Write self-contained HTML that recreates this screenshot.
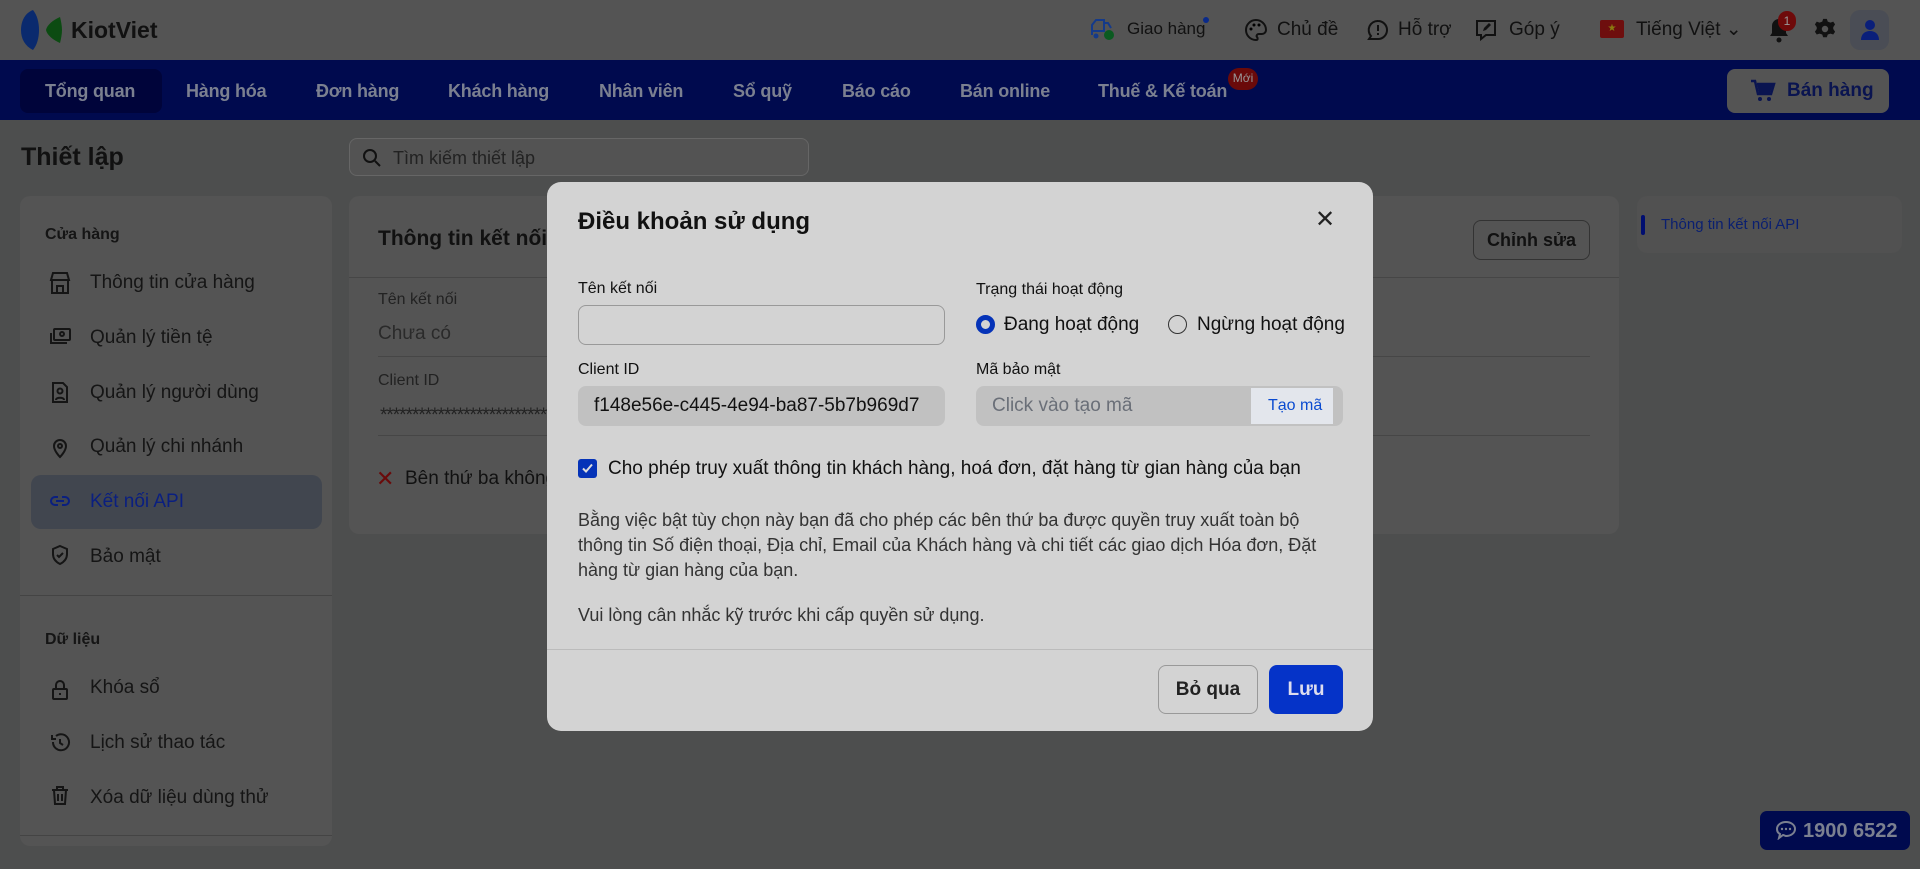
<!DOCTYPE html>
<html><head><meta charset="utf-8">
<style>
*{box-sizing:border-box;margin:0;padding:0}
body{width:1920px;height:869px;overflow:hidden;background:#4d4e4e;font-family:"Liberation Sans","DejaVu Sans",sans-serif;position:relative;color:#111}
.a{position:absolute;white-space:nowrap}
.c{line-height:24px}
svg{display:block}
</style></head><body>
<!-- top bar -->
<div class="a" style="left:0;top:0;width:1920px;height:60px;background:#545454"></div>
<svg class="a" style="left:20px;top:10px" width="42" height="40" viewBox="0 0 42 40"><path d="M13 0C5 3 1 11 1 20c0 9 4 16 12 20 4-5 6-12 6-20S17 5 13 0z" fill="#0a2a6e"/><path d="M40 7c-7 3-13 8-14 13 1 5 7 10 14 13 1-4 2-9 2-13s-1-9-2-13z" fill="#0c4b12"/></svg>
<div class="a" style="left:71px;top:16px;font-size:23px;font-weight:bold;line-height:28px;color:#111">KiotViet</div>

<svg class="a" style="left:1090px;top:17px" width="26" height="24" viewBox="0 0 26 24"><path d="M2 18V8l4-5h8v11H2M14 6h4l3 5" fill="none" stroke="#143a8a" stroke-width="2"/><circle cx="6" cy="19" r="2.5" fill="#143a8a"/><circle cx="19" cy="18" r="5" fill="#0a5a20"/></svg>
<div class="a c" style="left:1127px;top:17px;font-size:17px;color:#111">Giao hàng</div>
<div class="a" style="left:1203px;top:17px;width:6px;height:6px;border-radius:50%;background:#0a2a8a"></div>
<svg class="a" style="left:1244px;top:18px" width="24" height="24" viewBox="0 0 24 24"><path d="M12 2a10 10 0 100 20c2 0 2-2 1-3s0-3 2-3h3a4 4 0 004-4C22 6 17 2 12 2z" fill="none" stroke="#111" stroke-width="2"/><circle cx="7" cy="11" r="1.5"/><circle cx="10" cy="7" r="1.5"/><circle cx="15" cy="7" r="1.5"/></svg>
<div class="a c" style="left:1277px;top:18px;font-size:19px">Chủ đề</div>
<svg class="a" style="left:1366px;top:18px" width="24" height="24" viewBox="0 0 24 24"><path d="M12 3a9 9 0 110 18H3l2-3A9 9 0 0112 3z" fill="none" stroke="#111" stroke-width="2"/><path d="M12 7v6M12 15v2" stroke="#111" stroke-width="2"/></svg>
<div class="a c" style="left:1398px;top:18px;font-size:19px">Hỗ trợ</div>
<svg class="a" style="left:1474px;top:18px" width="24" height="24" viewBox="0 0 24 24"><path d="M3 3h18v14h-9l-5 4v-4H3z" fill="none" stroke="#111" stroke-width="2"/><path d="M9 13l1-3 5-5 2 2-5 5z" fill="#111"/></svg>
<div class="a c" style="left:1509px;top:18px;font-size:19px">Góp ý</div>
<div class="a" style="left:1600px;top:20px;width:24px;height:18px;background:#6e0e0e;border-radius:2px;color:#8a7a10;font-size:10px;text-align:center;line-height:18px">★</div>
<div class="a c" style="left:1636px;top:18px;font-size:19px">Tiếng Việt ⌄</div>
<svg class="a" style="left:1767px;top:16px" width="24" height="28" viewBox="0 0 24 28"><path d="M12 3a7 7 0 00-7 7v7l-2 3h18l-2-3v-7a7 7 0 00-7-7z" fill="#111"/><circle cx="12" cy="24" r="2.5" fill="#111"/></svg>
<div class="a" style="left:1778px;top:11px;width:18px;height:20px;border-radius:9px;background:#6e0a0a;color:#999;font-size:12px;text-align:center;line-height:20px">1</div>
<svg class="a" style="left:1814px;top:18px" width="22" height="22" viewBox="0 0 24 24"><path d="M10 1h4l1 3 3 1 3-1 2 3-2 3v2l2 3-2 3-3-1-3 1-1 3h-4l-1-3-3-1-3 1-2-3 2-3v-2L1 7l2-3 3 1 3-1z" fill="#111"/><circle cx="12" cy="12" r="3.5" fill="#545454"/></svg>
<div class="a" style="left:1850px;top:10px;width:39px;height:40px;border-radius:10px;background:#4a4d55"></div>
<svg class="a" style="left:1859px;top:18px" width="22" height="24" viewBox="0 0 22 24"><circle cx="11" cy="7" r="5" fill="#0a1f7a"/><path d="M2 22c0-6 4-9 9-9s9 3 9 9z" fill="#0a1f7a"/></svg>

<!-- nav -->
<div class="a" style="left:0;top:60px;width:1920px;height:60px;background:#000a4e"></div>
<div class="a" style="left:20px;top:69px;width:142px;height:44px;border-radius:8px;background:#00043a"></div>
<div style="position:absolute;top:79px;left:0;font-size:18px;font-weight:bold;color:#7b8090;line-height:24px;letter-spacing:-0.2px">
<span class="a" style="left:45px">Tổng quan</span>
<span class="a" style="left:186px">Hàng hóa</span>
<span class="a" style="left:316px">Đơn hàng</span>
<span class="a" style="left:448px">Khách hàng</span>
<span class="a" style="left:599px">Nhân viên</span>
<span class="a" style="left:733px">Sổ quỹ</span>
<span class="a" style="left:842px">Báo cáo</span>
<span class="a" style="left:960px">Bán online</span>
<span class="a" style="left:1098px">Thuế &amp; Kế toán</span>
</div>
<div class="a" style="left:1228px;top:68px;width:30px;height:22px;border-radius:11px;background:#6a0a0a;color:#999;font-size:12px;text-align:center;line-height:20px">Mới</div>
<div class="a" style="left:1727px;top:69px;width:162px;height:44px;border-radius:8px;background:#545454"></div>
<svg class="a" style="left:1750px;top:78px" width="26" height="26" viewBox="0 0 26 26"><path d="M1 3h4l3 13h13l3-10H7" fill="none" stroke="#0a1450" stroke-width="2.5"/><circle cx="10" cy="21" r="2" fill="#0a1450"/><circle cx="19" cy="21" r="2" fill="#0a1450"/><path d="M7 6h16l-3 9H9z" fill="#0a1450"/></svg>
<div class="a c" style="left:1787px;top:79px;font-size:19px;font-weight:bold;color:#0a1450">Bán hàng</div>

<!-- page -->
<div class="a" style="left:21px;top:142px;font-size:25px;font-weight:bold;line-height:30px;color:#111">Thiết lập</div>
<div class="a" style="left:349px;top:138px;width:460px;height:38px;border:1px solid #666;border-radius:8px;background:#535353"></div>
<svg class="a" style="left:362px;top:148px" width="20" height="20" viewBox="0 0 20 20"><circle cx="8" cy="8" r="6" fill="none" stroke="#111" stroke-width="2"/><path d="M13 13l5 5" stroke="#111" stroke-width="2"/></svg>
<div class="a c" style="left:393px;top:146px;font-size:18px;color:#222">Tìm kiếm thiết lập</div>

<div class="a" style="left:20px;top:196px;width:312px;height:650px;border-radius:10px;background:#545454"></div>
<div class="a" style="left:31px;top:475px;width:291px;height:54px;border-radius:10px;background:#41464f"></div>
<div class="a" style="left:20px;top:595px;width:312px;height:1px;background:#444"></div>
<div class="a" style="left:20px;top:835px;width:312px;height:1px;background:#444"></div>
<div style="position:absolute;left:0;top:0;font-size:19px;color:#151515;line-height:24px">
<span class="a" style="left:45px;top:223px;font-size:16px;font-weight:bold">Cửa hàng</span>
<span class="a" style="left:90px;top:271px">Thông tin cửa hàng</span>
<span class="a" style="left:90px;top:326px">Quản lý tiền tệ</span>
<span class="a" style="left:90px;top:381px">Quản lý người dùng</span>
<span class="a" style="left:90px;top:435px">Quản lý chi nhánh</span>
<span class="a" style="left:90px;top:490px;color:#0a1f80">Kết nối API</span>
<span class="a" style="left:90px;top:545px">Bảo mật</span>
<span class="a" style="left:45px;top:628px;font-size:16px;font-weight:bold">Dữ liệu</span>
<span class="a" style="left:90px;top:676px">Khóa sổ</span>
<span class="a" style="left:90px;top:731px">Lịch sử thao tác</span>
<span class="a" style="left:90px;top:786px">Xóa dữ liệu dùng thử</span>
</div>
<svg class="a" style="left:48px;top:0" width="24" height="869" viewBox="0 0 24 869" fill="none" stroke="#151515" stroke-width="2">
<path d="M3 280h18l-2-7H5zM4 280v13h16v-13M9 293v-7h6v7"/>
<rect x="6" y="329" width="16" height="11" rx="1"/><path d="M3 333v10h16"/><circle cx="14" cy="334" r="2"/>
<path d="M5 383h10l4 4v15H5z"/><circle cx="12" cy="391" r="2.5"/><path d="M8 400c0-3 8-3 8 0"/>
<path d="M12 457s6-6 6-11a6 6 0 00-12 0c0 5 6 11 6 11z"/><circle cx="12" cy="446" r="2"/>
<path d="M10 497H7a4 4 0 000 8h3M14 497h3a4 4 0 010 8h-3M8 501h8" stroke="#0a1f80"/>
<path d="M12 546l7 3v5c0 5-3 8-7 10-4-2-7-5-7-10v-5z"/><path d="M9 555l2 2 4-4"/>
<rect x="5" y="689" width="14" height="10" rx="1"/><path d="M8 689v-4a4 4 0 018 0v4M12 693v2"/>
<path d="M5 742a8 8 0 103-6M4 735v4h4M12 739v4l3 2"/>
<path d="M4 790h16M9 790v-3h6v3M6 790l1 14h10l1-14M10 794v7M14 794v7"/>
</svg>

<div class="a" style="left:349px;top:196px;width:1270px;height:338px;border-radius:10px;background:#545454"></div>
<div class="a" style="left:349px;top:277px;width:1270px;height:1px;background:#464646"></div>
<div class="a" style="left:378px;top:226px;font-size:21px;font-weight:bold;line-height:26px">Thông tin kết nối API</div>
<div class="a" style="left:1473px;top:220px;width:117px;height:40px;border:1px solid #333;border-radius:8px;font-size:18px;font-weight:bold;line-height:38px;text-align:center">Chỉnh sửa</div>
<div class="a c" style="left:378px;top:288px;font-size:16px;color:#222">Tên kết nối</div>
<div class="a c" style="left:378px;top:322px;font-size:19px;color:#2a2a2a">Chưa có</div>
<div class="a" style="left:378px;top:356px;width:1212px;height:1px;background:#464646"></div>
<div class="a c" style="left:378px;top:369px;font-size:16px;color:#222">Client ID</div>
<div class="a c" style="left:380px;top:404px;font-size:19px;color:#222;letter-spacing:-1px">********************************</div>
<div class="a" style="left:378px;top:435px;width:1212px;height:1px;background:#464646"></div>
<div class="a c" style="left:376px;top:467px;font-size:22px;color:#6a0a0a">✕</div>
<div class="a c" style="left:405px;top:467px;font-size:19px">Bên thứ ba không được phép truy xuất</div>

<div class="a" style="left:1637px;top:196px;width:265px;height:57px;border-radius:10px;background:#515151"></div>
<div class="a" style="left:1641px;top:215px;width:4px;height:20px;background:#000e70;border-radius:2px"></div>
<div class="a c" style="left:1661px;top:213px;font-size:15px;color:#0a1f70">Thông tin kết nối API</div>

<div class="a" style="left:1760px;top:811px;width:150px;height:39px;border-radius:7px;background:#000a4e"></div>
<svg class="a" style="left:1775px;top:820px" width="22" height="20" viewBox="0 0 22 20"><path d="M11 2C6 2 2 5 2 9c0 2 1 4 3 5l-1 4 4-3c1 0 2 1 3 1 5 0 9-3 9-7s-4-7-9-7z" fill="none" stroke="#7b8090" stroke-width="2"/><circle cx="7" cy="9" r="1.2" fill="#7b8090"/><circle cx="11" cy="9" r="1.2" fill="#7b8090"/><circle cx="15" cy="9" r="1.2" fill="#7b8090"/></svg>
<div class="a c" style="left:1803px;top:819px;font-size:20px;font-weight:bold;color:#7b8090">1900 6522</div>

<!-- modal -->
<div class="a" style="left:547px;top:182px;width:826px;height:549px;border-radius:14px;background:#d3d3d3"></div>
<div class="a" style="left:578px;top:207px;font-size:24px;font-weight:bold;line-height:30px;color:#111">Điều khoản sử dụng</div>
<div class="a" style="left:1315px;top:206px;font-size:24px;line-height:28px;color:#222">✕</div>

<div class="a c" style="left:578px;top:277px;font-size:16px;color:#111">Tên kết nối</div>
<div class="a" style="left:578px;top:305px;width:367px;height:40px;border:1px solid #999;border-radius:8px;background:#d3d3d3"></div>
<div class="a c" style="left:976px;top:278px;font-size:16px;color:#111">Trạng thái hoạt động</div>
<div class="a" style="left:976px;top:315px;width:19px;height:19px;border-radius:50%;border:5px solid #0533b8;background:#d3d3d3"></div>
<div class="a c" style="left:1004px;top:313px;font-size:19px;color:#111">Đang hoạt động</div>
<div class="a" style="left:1168px;top:315px;width:19px;height:19px;border-radius:50%;border:1.5px solid #333"></div>
<div class="a c" style="left:1197px;top:313px;font-size:19px;color:#111">Ngừng hoạt động</div>

<div class="a c" style="left:578px;top:358px;font-size:16px;color:#111">Client ID</div>
<div class="a" style="left:578px;top:386px;width:367px;height:40px;border-radius:8px;background:#c1c1c1"></div>
<div class="a c" style="left:594px;top:394px;font-size:19px;color:#111">f148e56e-c445-4e94-ba87-5b7b969d7</div>
<div class="a c" style="left:976px;top:358px;font-size:16px;color:#111">Mã bảo mật</div>
<div class="a" style="left:976px;top:386px;width:367px;height:40px;border-radius:8px;background:#c1c1c1"></div>
<div class="a" style="left:1251px;top:388px;width:82px;height:36px;background:#e3e6ec"></div>
<div class="a c" style="left:992px;top:394px;font-size:19px;color:#6a6f78">Click vào tạo mã</div>
<div class="a c" style="left:1268px;top:394px;font-size:16px;color:#0b4bd0">Tạo mã</div>

<div class="a" style="left:578px;top:459px;width:19px;height:19px;border-radius:3px;background:#0533b8"></div>
<svg class="a" style="left:580px;top:461px" width="15" height="15" viewBox="0 0 15 15"><path d="M3 7.5l3 3 6-7" fill="none" stroke="#ddd" stroke-width="2"/></svg>
<div class="a c" style="left:608px;top:457px;font-size:19px;color:#111">Cho phép truy xuất thông tin khách hàng, hoá đơn, đặt hàng từ gian hàng của bạn</div>

<div class="a" style="left:578px;top:508px;width:770px;font-size:18px;line-height:25px;color:#333;white-space:normal">Bằng việc bật tùy chọn này bạn đã cho phép các bên thứ ba được quyền truy xuất toàn bộ thông tin Số điện thoại, Địa chỉ, Email của Khách hàng và chi tiết các giao dịch Hóa đơn, Đặt hàng từ gian hàng của bạn.</div>
<div class="a" style="left:578px;top:603px;font-size:18px;line-height:25px;color:#333">Vui lòng cân nhắc kỹ trước khi cấp quyền sử dụng.</div>

<div class="a" style="left:547px;top:649px;width:826px;height:1px;background:#bbb"></div>
<div class="a" style="left:1158px;top:665px;width:100px;height:49px;border:1px solid #999;border-radius:8px;font-size:19px;font-weight:bold;line-height:47px;text-align:center;color:#222">Bỏ qua</div>
<div class="a" style="left:1269px;top:665px;width:74px;height:49px;border-radius:8px;background:#0533c8;font-size:19px;font-weight:bold;line-height:49px;text-align:center;color:#dde">Lưu</div>
</body></html>
